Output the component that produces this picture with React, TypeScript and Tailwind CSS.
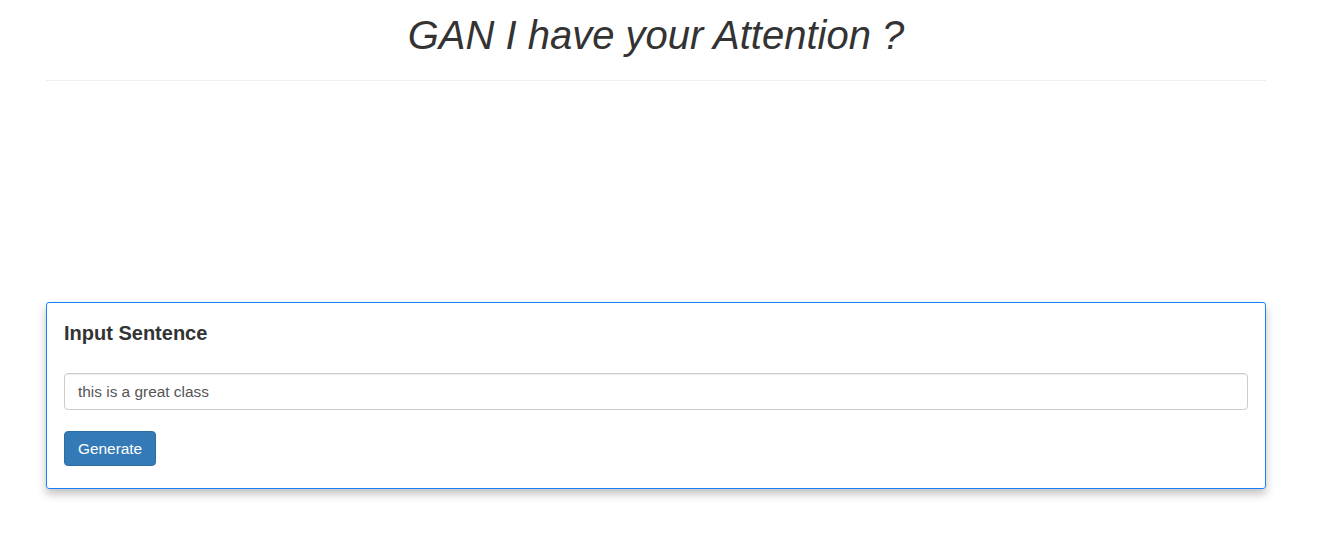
import React from 'react';

export default function App() {
  return (
    <div className="min-h-screen bg-white font-['Liberation_Sans',Arial,sans-serif] text-[#333]">
      <div className="ml-[46px] w-[1220px]">
        <h1 className="pt-[13px] pb-[23px] text-center text-[40px] leading-[1.1] italic font-normal border-b border-[#eee]">
          GAN I have your Attention ?
        </h1>

        <div className="h-[221px]" />

        <div className="border border-[#1a7ffb] rounded-[3px] shadow-[0_5px_10px_rgba(0,0,0,0.25)] px-[17px] pt-[17px] pb-[22px]">
          <h3 className="text-[20px] font-bold leading-[1.1] pt-[2px]">Input Sentence</h3>
          <input
            className="mt-[29px] block w-full h-[37px] px-[13px] text-[15.4px] text-[#555] border border-[#ccc] rounded-[4px] shadow-[inset_0_1px_1px_rgba(0,0,0,0.075)] outline-none"
            defaultValue="this is a great class"
          />
          <button className="mt-[21px] h-[35px] px-[13px] text-[15.4px] text-white bg-[#337ab7] border border-[#2e6da4] rounded-[4px]">
            Generate
          </button>
        </div>
      </div>
    </div>
  );
}
